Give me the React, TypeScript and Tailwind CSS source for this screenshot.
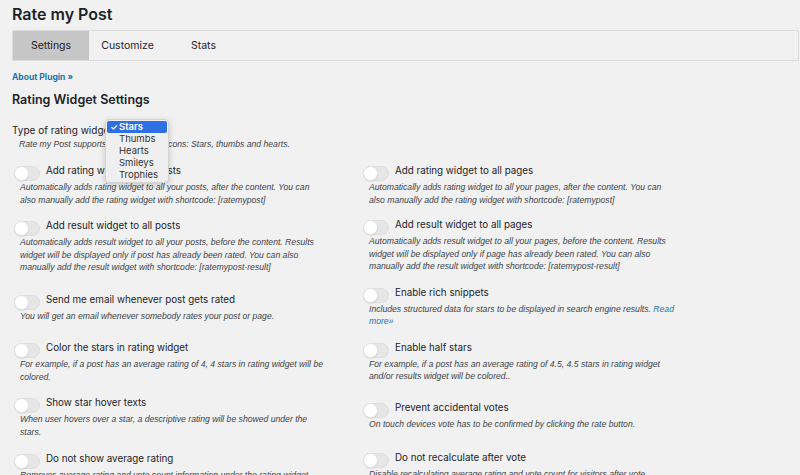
import React from 'react'

type Option = {
  label: string
  desc: React.ReactNode
  mt: string
  descWidth?: string
}

const leftOptions: Option[] = [
  {
    label: 'Add rating widget to all posts',
    desc: 'Automatically adds rating widget to all your posts, after the content. You can also manually add the rating widget with shortcode: [ratemypost]',
    mt: 'mt-0',
  },
  {
    label: 'Add result widget to all posts',
    desc: 'Automatically adds result widget to all your posts, before the content. Results widget will be displayed only if post has already been rated. You can also manually add the result widget with shortcode: [ratemypost-result]',
    mt: 'mt-[12px]',
  },
  {
    label: 'Send me email whenever post gets rated',
    desc: 'You will get an email whenever somebody rates your post or page.',
    mt: 'mt-[18px]',
  },
  {
    label: 'Color the stars in rating widget',
    desc: 'For example, if a post has an average rating of 4, 4 stars in rating widget will be colored.',
    mt: 'mt-[18px]',
  },
  {
    label: 'Show star hover texts',
    desc: 'When user hovers over a star, a descriptive rating will be showed under the stars.',
    mt: 'mt-[12px]',
  },
  {
    label: 'Do not show average rating',
    desc: 'Removes average rating and vote count information under the rating widget.',
    mt: 'mt-[13px]',
  },
]

const rightOptions: Option[] = [
  {
    label: 'Add rating widget to all pages',
    desc: 'Automatically adds rating widget to all your pages, after the content. You can also manually add the rating widget with shortcode: [ratemypost]',
    mt: 'mt-0',
  },
  {
    label: 'Add result widget to all pages',
    desc: 'Automatically adds result widget to all your pages, before the content. Results widget will be displayed only if page has already been rated. You can also manually add the result widget with shortcode: [ratemypost-result]',
    mt: 'mt-[11px]',
  },
  {
    label: 'Enable rich snippets',
    desc: (
      <>
        Includes structured data for stars to be displayed in search engine results.{' '}
        <a className="text-[#2271b1]">Read more»</a>
      </>
    ),
    mt: 'mt-[12px]',
    descWidth: 'w-[312px]',
  },
  {
    label: 'Enable half stars',
    desc: 'For example, if a post has an average rating of 4.5, 4.5 stars in rating widget and/or results widget will be colored..',
    mt: 'mt-[12px]',
  },
  {
    label: 'Prevent accidental votes',
    desc: 'On touch devices vote has to be confirmed by clicking the rate button.',
    mt: 'mt-[17px]',
  },
  {
    label: 'Do not recalculate after vote',
    desc: 'Disable recalculating average rating and vote count for visitors after vote.',
    mt: 'mt-[20px]',
  },
]

function Toggle() {
  return (
    <span className="relative mt-[3px] ml-[2px] inline-flex h-[15px] w-[26px] shrink-0 rounded-full border border-[#dedede] bg-[#e6e6e6]">
      <span className="absolute -left-px -top-px h-[15px] w-[15px] rounded-full border border-[#e2e2e2] bg-white shadow-[0_1px_1px_rgba(0,0,0,0.08)]" />
    </span>
  )
}

function OptionRow({ option }: { option: Option }) {
  return (
    <div className={option.mt}>
      <div className="flex h-4 items-start">
        <Toggle />
        <span className="ml-[6px] text-[9.8px] leading-[16px] text-[#1d2327]">{option.label}</span>
      </div>
      <p className={`ml-2 mt-[2px] ${option.descWidth ?? 'w-[304px]'} font-['Liberation_Sans',Arial,sans-serif] text-[8.64px] italic leading-[12.5px] text-[#3c434a]`}>
        {option.desc}
      </p>
    </div>
  )
}

function RatingTypeMenu() {
  const items = ['Thumbs', 'Hearts', 'Smileys', 'Trophies']
  return (
    <div className="absolute left-[105px] top-[119px] w-[64px] rounded-[4px] border border-[#d4d4d4] bg-[#efefef] py-[1px] shadow-[0_2px_6px_rgba(0,0,0,0.18)]">
      <div className="mx-[1px] flex h-[12px] items-center rounded-[2px] bg-[#2f6fe4] text-[9.5px] font-semibold text-white">
        <span className="w-[12px] pl-[3px] text-[9px]">✓</span>
        <span>Stars</span>
      </div>
      {items.map((item) => (
        <div key={item} className="flex h-[12px] items-center pl-[13px] text-[9.5px] text-[#333]">
          {item}
        </div>
      ))}
    </div>
  )
}

export default function App() {
  return (
    <div className="relative h-[475px] w-[800px] overflow-hidden bg-[#f1f1f1] pl-3 font-['Inter',sans-serif]">
      {/* Page title */}
      <h1 className="pt-[3px] text-[16px] font-semibold leading-[22px] text-[#1d2327]">Rate my Post</h1>

      {/* Tabs */}
      <div className="mr-[1px] mt-[5px] flex h-[31px] border border-[#dcdcdc] bg-[#f1f1f1]">
        <div className="flex w-[76px] items-center justify-center bg-[#c6c6c6] text-[10.5px] text-[#1d2327]">Settings</div>
        <div className="flex w-[77px] items-center justify-center text-[10.5px] text-[#1d2327]">Customize</div>
        <div className="flex w-[75px] items-center justify-center text-[10.5px] text-[#1d2327]">Stats</div>
      </div>

      <a className="mt-[10px] block text-[8.5px] font-bold leading-[12px] text-[#2271b1]">About Plugin »</a>

      <h2 className="mt-[9px] text-[12.5px] font-semibold leading-[16px] text-[#1d2327]">Rating Widget Settings</h2>

      {/* Rating type */}
      <div className="mt-[14px] text-[10px] leading-[16px] text-[#1d2327]">Type of rating widget</div>
      <p className="ml-[7px] font-['Liberation_Sans',Arial,sans-serif] text-[8.64px] italic leading-[12px] text-[#3c434a]">
        Rate my Post supports different rating icons: Stars, thumbs and hearts.
      </p>

      {/* Options */}
      <div className="mt-[13px] flex">
        <div className="w-[349px]">
          {leftOptions.map((o) => (
            <OptionRow key={o.label} option={o} />
          ))}
        </div>
        <div className="w-[360px]">
          {rightOptions.map((o) => (
            <OptionRow key={o.label} option={o} />
          ))}
        </div>
      </div>

      <RatingTypeMenu />
    </div>
  )
}
